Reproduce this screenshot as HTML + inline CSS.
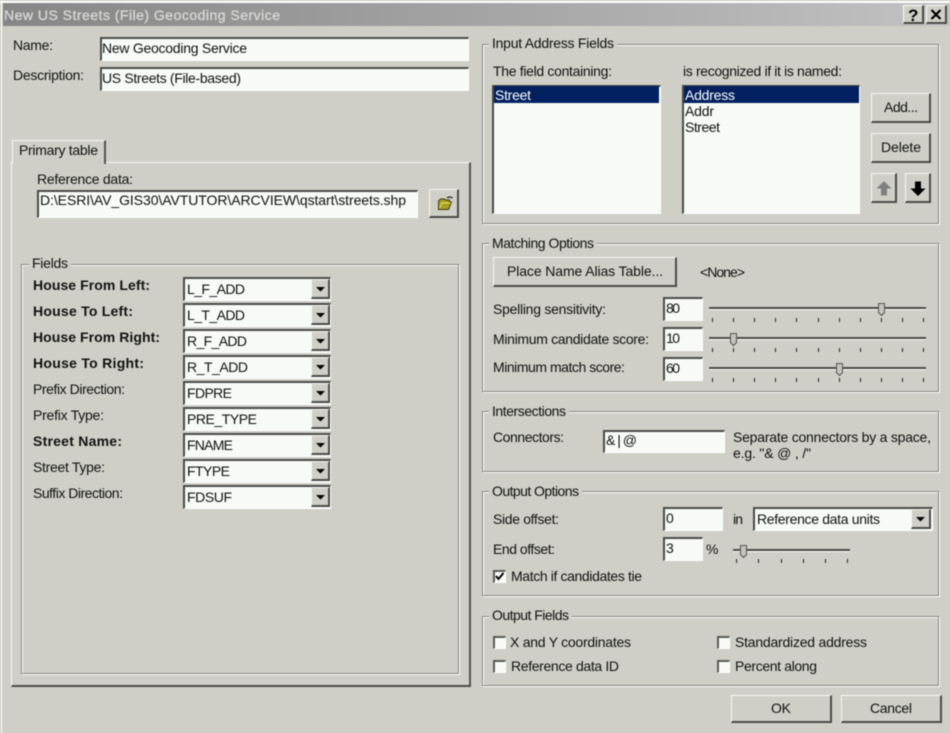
<!DOCTYPE html>
<html><head><meta charset="utf-8">
<style>
html,body{margin:0;padding:0}
body{width:950px;height:733px;overflow:hidden;position:relative;background:#cfcfc7}
div{position:absolute;box-sizing:border-box}
#w{left:0;top:0;width:950px;height:733px;background:#cfcfc7;filter:blur(.4px)}
.s{background:#f6fbf6;border-style:solid;border-width:2px 1px 1px 2px;border-color:#4a4a48 #fff #fff #4a4a48}
.c{background:#f6fbf6;border-style:solid;border-width:2px 1px 1px 2px;border-color:#5c5c58 #fff #fff #5c5c58}
.r{background:#cfcfc7;border-style:solid;border-width:1px 2px 2px 1px;border-color:#fafaf6 #4a4a48 #4a4a48 #fafaf6}
.g{border:1px solid #85857f;box-shadow:1px 1px 0 #fff,inset 1px 1px 0 #fff}
.h{background:#cfcfc7;height:14px}
svg{position:absolute;left:0;top:0}
text{font-family:"Liberation Sans",sans-serif;font-size:14px;fill:#111}
.b{font-weight:bold}
.w{fill:#fbfdfb}
</style></head><body>
<div id="w">
<div style="left:1px;top:0;width:1px;height:733px;background:#fff"></div>
<div style="left:0;top:1px;width:950px;height:2px;background:#fff"></div>
<div style="left:3px;top:3px;width:947px;height:23px;background:linear-gradient(90deg,#868686,#c2c2c2)"></div>

<div class="s" style="left:100px;top:37px;width:369px;height:24px"></div>
<div class="s" style="left:100px;top:67px;width:369px;height:24px"></div>

<div style="left:11px;top:162px;width:460px;height:525px;border-style:solid;border-width:1px 2px 2px 1px;border-color:#fafaf6 #55554f #4a4a48 #fafaf6"></div>
<div style="left:12px;top:140px;width:94px;height:24px;background:#cfcfc7;border-style:solid;border-width:1px 2px 0 1px;border-color:#fafaf6 #55554f #4a4a48 #fafaf6"></div>
<div class="s" style="left:37px;top:190px;width:381px;height:28px"></div>
<div class="r" style="left:429px;top:189px;width:30px;height:29px"></div>

<div class="g" style="left:21px;top:264px;width:438px;height:410px"></div>
<div class="h" style="left:29px;top:257px;width:42px"></div>

<div class="s" style="left:183px;top:277px;width:148px;height:24px"></div><div class="r" style="left:311px;top:279px;width:19px;height:20px"></div>
<div class="s" style="left:183px;top:303px;width:148px;height:24px"></div><div class="r" style="left:311px;top:305px;width:19px;height:20px"></div>
<div class="s" style="left:183px;top:329px;width:148px;height:24px"></div><div class="r" style="left:311px;top:331px;width:19px;height:20px"></div>
<div class="s" style="left:183px;top:355px;width:148px;height:24px"></div><div class="r" style="left:311px;top:357px;width:19px;height:20px"></div>
<div class="s" style="left:183px;top:381px;width:148px;height:24px"></div><div class="r" style="left:311px;top:383px;width:19px;height:20px"></div>
<div class="s" style="left:183px;top:407px;width:148px;height:24px"></div><div class="r" style="left:311px;top:409px;width:19px;height:20px"></div>
<div class="s" style="left:183px;top:433px;width:148px;height:24px"></div><div class="r" style="left:311px;top:435px;width:19px;height:20px"></div>
<div class="s" style="left:183px;top:459px;width:148px;height:24px"></div><div class="r" style="left:311px;top:461px;width:19px;height:20px"></div>
<div class="s" style="left:183px;top:485px;width:148px;height:24px"></div><div class="r" style="left:311px;top:487px;width:19px;height:20px"></div>

<div class="g" style="left:482px;top:44px;width:457px;height:180px"></div><div class="h" style="left:489px;top:37px;width:128px"></div>
<div class="g" style="left:482px;top:243px;width:457px;height:149px"></div><div class="h" style="left:489px;top:236px;width:108px"></div>
<div class="g" style="left:482px;top:411px;width:457px;height:61px"></div><div class="h" style="left:489px;top:404px;width:80px"></div>
<div class="g" style="left:482px;top:491px;width:457px;height:105px"></div><div class="h" style="left:489px;top:484px;width:93px"></div>
<div class="g" style="left:482px;top:616px;width:457px;height:70px"></div><div class="h" style="left:489px;top:609px;width:83px"></div>

<div class="s" style="left:492px;top:85px;width:169px;height:129px"></div>
<div style="left:494px;top:86px;width:165px;height:17px;background:#02205f"></div>
<div class="s" style="left:682px;top:85px;width:178px;height:129px"></div>
<div style="left:684px;top:86px;width:175px;height:17px;background:#02205f"></div>
<div class="r" style="left:871px;top:93px;width:60px;height:30px"></div>
<div class="r" style="left:871px;top:133px;width:60px;height:30px"></div>
<div class="r" style="left:871px;top:173px;width:26px;height:30px"></div>
<div class="r" style="left:905px;top:173px;width:26px;height:30px"></div>
<div class="r" style="left:903px;top:5px;width:21px;height:19px"></div>
<div class="r" style="left:926px;top:5px;width:21px;height:19px"></div>

<div class="r" style="left:493px;top:257px;width:184px;height:30px"></div>
<div class="s" style="left:663px;top:297px;width:40px;height:24px"></div>
<div class="s" style="left:663px;top:327px;width:40px;height:24px"></div>
<div class="s" style="left:663px;top:357px;width:40px;height:24px"></div>
<div class="s" style="left:603px;top:430px;width:122px;height:23px"></div>
<div class="s" style="left:663px;top:507px;width:60px;height:24px"></div>
<div class="s" style="left:753px;top:507px;width:180px;height:24px"></div><div class="r" style="left:911px;top:509px;width:20px;height:20px"></div>
<div class="s" style="left:663px;top:537px;width:40px;height:24px"></div>

<div class="c" style="left:493px;top:570px;width:13px;height:13px"></div>
<div class="c" style="left:493px;top:636px;width:13px;height:13px"></div>
<div class="c" style="left:493px;top:660px;width:13px;height:13px"></div>
<div class="c" style="left:717px;top:636px;width:13px;height:13px"></div>
<div class="c" style="left:717px;top:660px;width:13px;height:13px"></div>

<div class="r" style="left:731px;top:695px;width:101px;height:28px"></div>
<div class="r" style="left:841px;top:695px;width:101px;height:28px"></div>

<svg width="950" height="733" viewBox="0 0 950 733">
<text x="4" y="20" style="fill:#d8d8d4;stroke:#d8d8d4;stroke-width:.3" textLength="276">New US Streets (File) Geocoding Service</text>
<text x="13" y="50" textLength="40">Name:</text>
<text x="13" y="80" textLength="71">Description:</text>
<text x="102" y="53" textLength="145">New Geocoding Service</text>
<text x="102" y="83" textLength="139">US Streets (File-based)</text>
<text x="19" y="155" textLength="79">Primary table</text>
<text x="37" y="184" textLength="96">Reference data:</text>
<text x="40" y="205" textLength="366">D:\ESRI\AV_GIS30\AVTUTOR\ARCVIEW\qstart\streets.shp</text>
<text x="32" y="268" textLength="36">Fields</text>

<text x="33" y="290" class="b" textLength="117">House From Left:</text>
<text x="33" y="316" class="b" textLength="100">House To Left:</text>
<text x="33" y="342" class="b" textLength="127">House From Right:</text>
<text x="33" y="368" class="b" textLength="111">House To Right:</text>
<text x="33" y="394" textLength="92">Prefix Direction:</text>
<text x="33" y="420" textLength="71">Prefix Type:</text>
<text x="33" y="446" class="b" textLength="89">Street Name:</text>
<text x="33" y="472" textLength="72">Street Type:</text>
<text x="33" y="498" textLength="90">Suffix Direction:</text>

<text x="187" y="294" textLength="58">L_F_ADD</text>
<text x="187" y="320" textLength="58">L_T_ADD</text>
<text x="187" y="346" textLength="60">R_F_ADD</text>
<text x="187" y="372" textLength="61">R_T_ADD</text>
<text x="187" y="398" textLength="45">FDPRE</text>
<text x="187" y="424" textLength="70">PRE_TYPE</text>
<text x="187" y="450" textLength="46">FNAME</text>
<text x="187" y="476" textLength="43">FTYPE</text>
<text x="187" y="502" textLength="45">FDSUF</text>
<g fill="#000">
<path d="M316 287h9l-4.500 4.500z"/><path d="M316 313h9l-4.500 4.500z"/><path d="M316 339h9l-4.500 4.500z"/><path d="M316 365h9l-4.500 4.500z"/><path d="M316 391h9l-4.500 4.500z"/><path d="M316 417h9l-4.500 4.500z"/><path d="M316 443h9l-4.500 4.500z"/><path d="M316 469h9l-4.500 4.500z"/><path d="M316 495h9l-4.500 4.500z"/>
<path d="M916 517h9l-4.500 4.500z"/>
</g>

<path d="M438.500 201l2-2h4l1 1h4v2h2l-3 7.500h-10z" fill="#a8a020" stroke="#3c3a10" stroke-width="1"/>
<path d="M439.500 208l2.500-5h9" fill="none" stroke="#e8e070" stroke-width="1"/>
<path d="M447 198q3-2 5.500 0" fill="none" stroke="#222" stroke-width="1.200"/>

<text x="492" y="48" textLength="122">Input Address Fields</text>
<text x="493" y="76" textLength="119">The field containing:</text>
<text x="683" y="76" textLength="159">is recognized if it is named:</text>
<text x="495" y="100" class="w" textLength="36">Street</text>
<text x="685" y="100" class="w" textLength="50">Address</text>
<text x="685" y="116" textLength="29">Addr</text>
<text x="685" y="132" textLength="35">Street</text>
<text x="884" y="112" textLength="34">Add...</text>
<text x="881" y="152" textLength="40">Delete</text>
<path d="M884 181l-7.500 7.500h4.500v7h6v-7h4.500z" fill="#808080"/>
<path d="M918 196l-7.500-7.500h4.500v-7h6v7h4.500z" fill="#000"/>
<text x="908" y="21" class="b" style="font-size:17px;fill:#000">?</text>
<path d="M931.500 10l9 9m0-9l-9 9" stroke="#000" stroke-width="2.200" fill="none"/>

<text x="492" y="248" textLength="102">Matching Options</text>
<text x="507" y="276" textLength="156">Place Name Alias Table...</text>
<text x="700" y="277" textLength="45">&lt;None&gt;</text>
<text x="493" y="314" textLength="113">Spelling sensitivity:</text>
<text x="493" y="344" textLength="156">Minimum candidate score:</text>
<text x="493" y="372" textLength="132">Minimum match score:</text>
<text x="666" y="313" textLength="14">80</text>
<text x="666" y="343" textLength="14">10</text>
<text x="666" y="373" textLength="14">60</text>

<g fill="none">
<path d="M709 308h217M709 338h217M709 368h217M733 550h117" stroke="#4a4a46" stroke-width="2"/>
<path d="M709 309.500h217M709 339.500h217M709 369.500h217M733 551.500h117" stroke="#fff" stroke-width="1"/>
</g>
<g fill="#222">
<rect x="712" y="318" width="1" height="4"/><rect x="733" y="318" width="1" height="4"/><rect x="754" y="318" width="1" height="4"/><rect x="775" y="318" width="1" height="4"/><rect x="796" y="318" width="1" height="4"/><rect x="818" y="318" width="1" height="4"/><rect x="839" y="318" width="1" height="4"/><rect x="860" y="318" width="1" height="4"/><rect x="881" y="318" width="1" height="4"/><rect x="902" y="318" width="1" height="4"/><rect x="923" y="318" width="1" height="4"/>
<rect x="712" y="348" width="1" height="4"/><rect x="733" y="348" width="1" height="4"/><rect x="754" y="348" width="1" height="4"/><rect x="775" y="348" width="1" height="4"/><rect x="796" y="348" width="1" height="4"/><rect x="818" y="348" width="1" height="4"/><rect x="839" y="348" width="1" height="4"/><rect x="860" y="348" width="1" height="4"/><rect x="881" y="348" width="1" height="4"/><rect x="902" y="348" width="1" height="4"/><rect x="923" y="348" width="1" height="4"/>
<rect x="712" y="378" width="1" height="4"/><rect x="733" y="378" width="1" height="4"/><rect x="754" y="378" width="1" height="4"/><rect x="775" y="378" width="1" height="4"/><rect x="796" y="378" width="1" height="4"/><rect x="818" y="378" width="1" height="4"/><rect x="839" y="378" width="1" height="4"/><rect x="860" y="378" width="1" height="4"/><rect x="881" y="378" width="1" height="4"/><rect x="902" y="378" width="1" height="4"/><rect x="923" y="378" width="1" height="4"/>
<rect x="736" y="559" width="1" height="4"/><rect x="758" y="559" width="1" height="4"/><rect x="781" y="559" width="1" height="4"/><rect x="803" y="559" width="1" height="4"/><rect x="825" y="559" width="1" height="4"/><rect x="847" y="559" width="1" height="4"/>
</g>
<g fill="#c4c4bc" stroke="#55554f" stroke-width="1">
<path d="M878.500 303.500h6v9l-3 3-3-3z"/>
<path d="M730.500 333.500h6v9l-3 3-3-3z"/>
<path d="M836.500 363.500h6v9l-3 3-3-3z"/>
<path d="M740.500 545.500h6v9l-3 3-3-3z"/>
</g>

<text x="492" y="416" textLength="74">Intersections</text>
<text x="493" y="442" textLength="71">Connectors:</text>
<text x="606" y="445" textLength="31">&amp; | @</text>
<text x="733" y="442" textLength="198">Separate connectors by a space,</text>
<text x="733" y="458" textLength="78">e.g. "&amp; @ , /"</text>

<text x="492" y="496" textLength="87">Output Options</text>
<text x="493" y="524" textLength="66">Side offset:</text>
<text x="666" y="523">0</text>
<text x="733" y="524" textLength="10">in</text>
<text x="757" y="524" textLength="123">Reference data units</text>
<text x="493" y="554" textLength="62">End offset:</text>
<text x="666" y="553">3</text>
<text x="706" y="554" textLength="11">%</text>
<path d="M496 576l2.500 3 5-6" fill="none" stroke="#000" stroke-width="2"/>
<text x="511" y="581" textLength="131">Match if candidates tie</text>

<text x="492" y="620" textLength="77">Output Fields</text>
<text x="510" y="647" textLength="121">X and Y coordinates</text>
<text x="511" y="671" textLength="108">Reference data ID</text>
<text x="735" y="647" textLength="132">Standardized address</text>
<text x="735" y="671" textLength="82">Percent along</text>

<text x="771" y="713" textLength="20">OK</text>
<text x="870" y="713" textLength="42">Cancel</text>
</svg>
</div>
</body></html>
